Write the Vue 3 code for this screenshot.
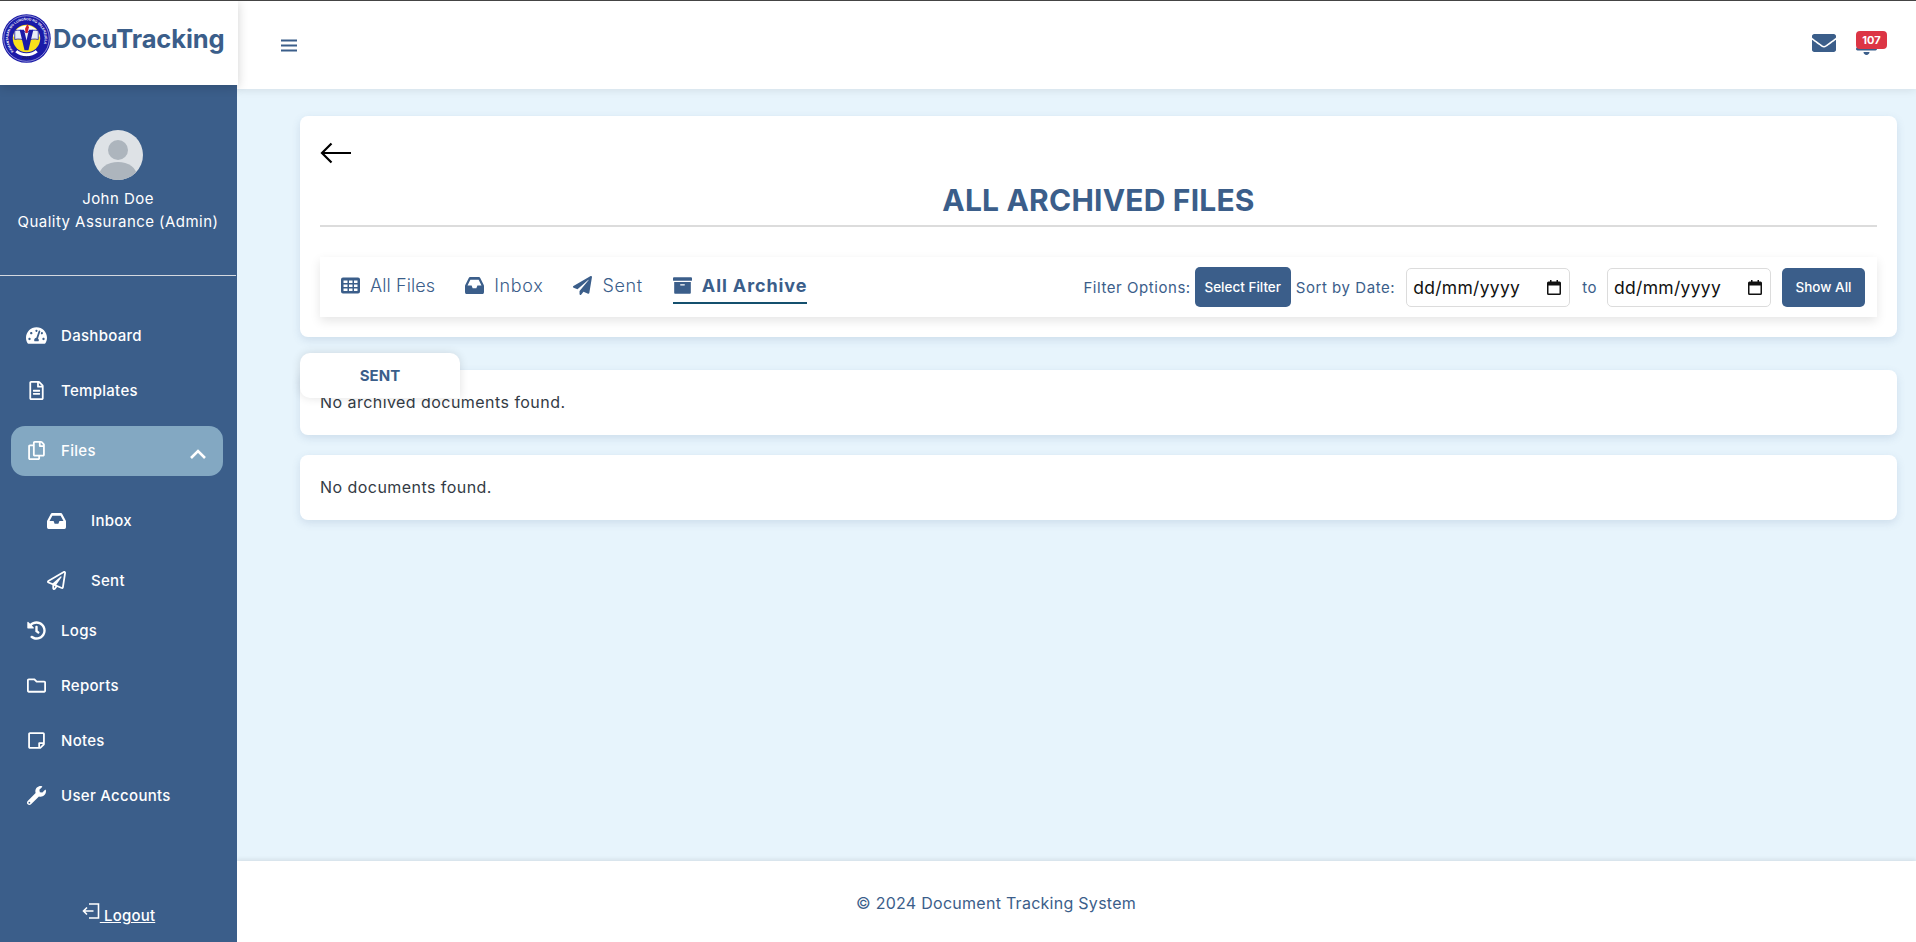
<template>
  <div class="app">
    <aside class="sidebar">
      <div class="brand">
        <svg class="seal" viewBox="0 0 100 100">
          <defs>
            <path id="seal-ring" d="M24 76A37 37 0 1 1 76 76" />
          </defs>
          <circle cx="50" cy="50" r="49.500" fill="#1a1aa8" />
          <circle cx="50" cy="50" r="46.500" fill="none" stroke="#fff" stroke-width="1" />
          <text class="seal-text"><textPath href="#seal-ring">PAMANTASAN NG LUNGSOD NG VALENZUELA</textPath></text>
          <path d="M27 78a37 37 0 0 0 46 0l-8-8H35z" fill="#fff" />
          <circle cx="50" cy="50" r="30" fill="#1a1aa8" />
          <circle cx="50" cy="50" r="28" fill="#f9e21b" />
          <path d="M22.500 46a28 28 0 0 1 55 0z" fill="#fff" />
          <path d="M26 34c8-2 17-1 24 4 7-5 16-6 24-4v18c-8-2-17-1-24 4-7-5-16-6-24-4z" fill="#e8edf6" stroke="#1a1aa8" stroke-width="1.600" />
          <path d="M36 32h9l5 22 5-22h9L54 74h-8z" fill="#1a1aa8" />
          <path d="M52 20l3 7-3 12h-4l-1-9z" fill="#d2232a" />
          <text x="50" y="92" class="seal-year">2002</text>
        </svg>
        <span class="brand-name">DocuTracking</span>
      </div>

      <div class="profile">
        <svg class="avatar" viewBox="0 0 50 50">
          <defs>
            <clipPath id="avatar-clip"><circle cx="25" cy="25" r="25" /></clipPath>
          </defs>
          <g clip-path="url(#avatar-clip)">
            <rect width="50" height="50" fill="#dee2e6" />
            <circle cx="25" cy="20" r="10" fill="#adb5bd" />
            <ellipse cx="25" cy="46" rx="19" ry="14" fill="#adb5bd" />
          </g>
        </svg>
        <div class="profile-name">John Doe</div>
        <div class="profile-name">Quality Assurance (Admin)</div>
      </div>

      <nav class="nav">
        <a class="nav-item">
          <svg class="nav-icon" viewBox="0 0 576 512"><path fill="currentColor" d="M288 32C128.94 32 0 160.94 0 320c0 52.8 14.25 102.26 39.06 144.8 5.61 9.62 16.3 15.2 27.44 15.2h443c11.14 0 21.83-5.58 27.44-15.2C561.75 422.26 576 372.8 576 320c0-159.06-128.94-288-288-288zm0 64c14.71 0 26.58 10.13 30.32 23.65-1.11 2.26-2.64 4.23-3.45 6.67l-9.22 27.67c-5.13 3.49-10.97 6.01-17.64 6.01-17.67 0-32-14.33-32-32S270.33 96 288 96zM96 384c-17.67 0-32-14.33-32-32s14.33-32 32-32 32 14.33 32 32-14.33 32-32 32zm48-160c-17.67 0-32-14.33-32-32s14.33-32 32-32 32 14.33 32 32-14.33 32-32 32zm246.77-72.41l-61.33 184C343.13 347.33 352 364.54 352 384c0 11.72-3.38 22.55-8.88 32H232.88c-5.5-9.45-8.88-20.28-8.88-32 0-33.94 26.5-61.43 59.9-63.59l61.34-184.01c4.17-12.56 17.73-19.45 30.36-15.17 12.57 4.19 19.35 17.79 15.17 30.36zm14.66 57.2l15.52-46.55c3.47-1.29 7.13-2.23 11.05-2.23 17.67 0 32 14.33 32 32s-14.33 32-32 32c-11.38-.01-20.89-6.28-26.57-15.22zM480 384c-17.67 0-32-14.33-32-32s14.33-32 32-32 32 14.33 32 32-14.33 32-32 32z" /></svg>
          Dashboard
        </a>
        <a class="nav-item">
          <svg class="nav-icon" viewBox="0 0 384 512"><path fill="currentColor" d="M288 248v28c0 6.6-5.4 12-12 12H108c-6.6 0-12-5.4-12-12v-28c0-6.6 5.4-12 12-12h168c6.6 0 12 5.4 12 12zm-12 72H108c-6.6 0-12 5.4-12 12v28c0 6.6 5.4 12 12 12h168c6.6 0 12-5.4 12-12v-28c0-6.6-5.4-12-12-12zm108-188.1V464c0 26.5-21.5 48-48 48H48c-26.5 0-48-21.5-48-48V48C0 21.5 21.5 0 48 0h204.1C264.8 0 277 5.1 286 14.1L369.9 98c9 8.9 14.1 21.2 14.1 33.9zm-128-80V128h76.1L256 51.9zM336 464V176H232c-13.3 0-24-10.7-24-24V48H48v416h288z" /></svg>
          Templates
        </a>
        <a class="nav-item active">
          <svg class="nav-icon" viewBox="0 0 448 512"><path fill="currentColor" d="M433.941 65.941l-51.882-51.882A48 48 0 0 0 348.118 0H176c-26.51 0-48 21.49-48 48v48H48c-26.51 0-48 21.49-48 48v320c0 26.51 21.49 48 48 48h224c26.51 0 48-21.49 48-48v-48h80c26.51 0 48-21.49 48-48V99.882a48 48 0 0 0-14.059-33.941zM266 464H54a6 6 0 0 1-6-6V150a6 6 0 0 1 6-6h74v224c0 26.51 21.49 48 48 48h96v42a6 6 0 0 1-6 6zm128-96H182a6 6 0 0 1-6-6V54a6 6 0 0 1 6-6h106v88c0 13.255 10.745 24 24 24h88v202a6 6 0 0 1-6 6zm6-256h-64V48h9.632c1.591 0 3.117.632 4.243 1.757l48.368 48.368a6 6 0 0 1 1.757 4.243V112z" /></svg>
          Files
          <svg class="chevron" viewBox="0 0 18 11"><path d="M2 9l7-7 7 7" fill="none" stroke="currentColor" stroke-width="2.600" /></svg>
        </a>
        <div class="sub-nav">
          <a class="sub-item">
            <svg class="sub-icon inbox-icon" viewBox="0 64 576 384" preserveAspectRatio="none"><path fill="currentColor" :d="inboxPath" /></svg>
            Inbox
          </a>
          <a class="sub-item">
            <svg class="sub-icon" viewBox="0 0 512 512"><path fill="currentColor" d="M440 6.5L24 246.4c-34.4 19.9-31.1 70.8 5.7 85.9L144 379.6V464c0 46.4 59.2 65.5 86.6 28.6l43.8-59.1 111.9 46.2c5.9 2.4 12.1 3.6 18.3 3.6 8.2 0 16.3-2.1 23.6-6.2 12.8-7.2 21.6-20 23.9-34.5l59.4-387.2c6.1-40.1-36.9-68.8-71.5-48.9zM192 464v-64.6l36.6 15.1L192 464zm212.6-28.7l-153.8-63.5L391 169.5c10.7-15.5-9.5-33.5-23.7-21.2L155.8 332.6 48 288 464 48l-59.4 387.3z" /></svg>
            Sent
          </a>
        </div>
        <a class="nav-item">
          <svg class="nav-icon" viewBox="0 0 512 512"><path fill="currentColor" d="M504 255.531c.253 136.64-111.18 248.372-247.82 248.468-59.015.042-113.223-20.53-155.822-54.911-11.077-8.94-11.905-25.541-1.839-35.607l11.267-11.267c8.609-8.609 22.353-9.551 31.891-1.984C173.062 425.135 212.781 440 256 440c101.705 0 184-82.311 184-184 0-101.705-82.311-184-184-184-48.814 0-93.149 18.969-126.068 49.932l50.754 50.754c10.08 10.08 2.941 27.314-11.313 27.314H24c-8.837 0-16-7.163-16-16V38.627c0-14.254 17.234-21.393 27.314-11.314l49.372 49.372C129.209 34.136 189.552 8 256 8c136.81 0 247.747 110.78 248 247.531zm-180.912 78.784l9.823-12.63c8.138-10.463 6.253-25.542-4.21-33.679L288 256.349V152c0-13.255-10.745-24-24-24h-16c-13.255 0-24 10.745-24 24v135.651l65.409 50.874c10.463 8.137 25.541 6.253 33.679-4.21z" /></svg>
          Logs
        </a>
        <a class="nav-item">
          <svg class="nav-icon" viewBox="0 0 512 512"><path fill="currentColor" d="M464 128H272l-54.63-54.63c-6-6-14.14-9.37-22.63-9.37H48C21.49 64 0 85.49 0 112v288c0 26.51 21.49 48 48 48h416c26.51 0 48-21.49 48-48V176c0-26.51-21.49-48-48-48zm0 272H48V112h140.12l54.63 54.63c6 6 14.14 9.37 22.63 9.37H464v224z" /></svg>
          Reports
        </a>
        <a class="nav-item">
          <svg class="nav-icon" viewBox="0 0 448 512"><path fill="currentColor" d="M448 348.106V80c0-26.51-21.49-48-48-48H48C21.49 32 0 53.49 0 80v351.988c0 26.51 21.49 48 48 48h268.118a48 48 0 0 0 33.941-14.059l83.882-83.882A48 48 0 0 0 448 348.106zm-128 80v-76.118h76.118L320 428.106zM400 80v223.988H296c-13.255 0-24 10.745-24 24v104H48V80h352z" /></svg>
          Notes
        </a>
        <a class="nav-item">
          <svg class="nav-icon" viewBox="0 0 512 512"><path fill="currentColor" d="M507.73 109.1c-2.24-9.03-13.54-12.09-20.12-5.51l-74.36 74.36-67.88-11.31-11.31-67.88 74.36-74.36c6.62-6.62 3.43-17.9-5.66-20.16-47.38-11.74-99.55.91-136.58 37.93-39.64 39.64-50.55 97.1-34.05 147.2L18.74 402.76c-24.99 24.99-24.99 65.51 0 90.5 24.99 24.99 65.51 24.99 90.5 0l213.21-213.21c50.12 16.71 107.47 5.68 147.37-34.22 37.07-37.07 49.7-89.32 37.91-136.73zM64 472c-13.25 0-24-10.75-24-24 0-13.26 10.75-24 24-24s24 10.74 24 24c0 13.25-10.75 24-24 24z" /></svg>
          User Accounts
        </a>
      </nav>

      <a class="logout">
        <svg class="logout-icon" viewBox="0 0 18 17"><path d="M7 1h9.500v14H7M1.500 8h10M5 4.500L1.500 8 5 11.500" fill="none" stroke="currentColor" stroke-width="1.600" /></svg>
        <span>&nbsp;Logout</span>
      </a>
    </aside>

    <div class="main">
      <header class="topbar">
        <svg class="burger" viewBox="0 0 16 13"><path d="M0 1.500h16M0 6.500h16M0 11.500h16" stroke="currentColor" stroke-width="2" /></svg>
        <div class="top-icons">
          <svg class="mail" viewBox="0 0 512 512"><path fill="currentColor" d="M502.3 190.8c3.9-3.1 9.7-.2 9.7 4.7V400c0 26.5-21.5 48-48 48H48c-26.5 0-48-21.5-48-48V195.6c0-5 5.7-7.8 9.7-4.7 22.4 17.4 52.1 39.5 154.1 113.6 21.1 15.4 56.7 47.8 92.2 47.6 35.7.3 72-32.8 92.3-47.6 102-74.1 131.6-96.3 154-113.7zM256 320c23.2.4 56.6-29.2 73.4-41.4 132.7-96.3 142.8-104.7 173.4-128.7 5.8-4.5 9.2-11.5 9.2-18.9v-19c0-26.5-21.5-48-48-48H48C21.5 64 0 85.5 0 112v19c0 7.4 3.4 14.3 9.2 18.9 30.6 23.9 40.7 32.4 173.4 128.7 16.8 12.2 50.2 41.8 73.4 41.4z" /></svg>
          <div class="bell-wrap">
            <svg class="bell" viewBox="0 0 448 512"><path fill="currentColor" d="M224 512c35.32 0 63.97-28.65 63.97-64H160.03c0 35.35 28.65 64 63.97 64zm215.39-149.71c-19.32-20.76-55.47-51.99-55.47-154.29 0-77.7-54.48-139.9-127.94-155.16V32c0-17.67-14.32-32-31.98-32s-31.98 14.33-31.98 32v20.84C118.56 68.1 64.08 130.3 64.08 208c0 102.3-36.15 133.53-55.47 154.29-6 6.45-8.66 14.16-8.61 21.71.11 16.4 12.98 32 32.1 32h383.8c19.12 0 32-15.6 32.1-32 .05-7.55-2.61-15.27-8.61-21.71z" /></svg>
            <span class="badge">107</span>
          </div>
        </div>
      </header>

      <main class="content">
        <section class="card head-card">
          <svg class="back" viewBox="0 0 32 22"><path d="M31 11H2M11.500 1.500L2 11l9.500 9.500" fill="none" stroke="#000" stroke-width="2.200" /></svg>
          <h1 class="title">ALL ARCHIVED FILES</h1>
          <div class="toolbar">
            <div class="tabs">
              <a class="tab tab-files">
                <svg class="tab-icon" viewBox="0 0 19 16">
                  <path fill="currentColor" fill-rule="evenodd" d="M2 0h15a2 2 0 0 1 2 2v12a2 2 0 0 1-2 2H2a2 2 0 0 1-2-2V2a2 2 0 0 1 2-2zM2.500 3v2.500h4V3zm5.500 0v2.500h3.500V3zm5 0v2.500h3.500V3zM2.500 7v2.500h4V7zM8 7v2.500h3.500V7zm5 0v2.500h3.500V7zM2.500 11v2.500h4V11zM8 11v2.500h3.500V11zm5 0v2.500h3.500V11z" />
                </svg>
                All Files
              </a>
              <a class="tab">
                <svg class="tab-icon inbox-icon" viewBox="0 64 576 384" preserveAspectRatio="none"><path fill="currentColor" :d="inboxPath" /></svg>
                Inbox
              </a>
              <a class="tab">
                <svg class="tab-icon" viewBox="0 0 512 512"><path fill="currentColor" d="M476 3.2L12.5 270.6c-18.1 10.4-15.8 35.6 2.2 43.2L121 358.4l287.3-253.2c5.5-4.9 13.3 2.6 8.6 8.3L176 407v80.5c0 23.6 28.5 32.9 42.5 15.8L282 426l124.6 52.2c14.2 6 30.4-2.9 33-18.2l72-432C515 7.8 493.3-6.8 476 3.2z" /></svg>
                Sent
              </a>
              <a class="tab tab-active">
                <svg class="tab-icon" viewBox="0 0 512 512"><path fill="currentColor" d="M32 448c0 17.7 14.3 32 32 32h384c17.7 0 32-14.3 32-32V160H32v288zm160-212c0-6.6 5.4-12 12-12h104c6.6 0 12 5.4 12 12v8c0 6.6-5.4 12-12 12H204c-6.6 0-12-5.4-12-12v-8zM480 32H32C14.3 32 0 46.3 0 64v48c0 8.8 7.2 16 16 16h480c8.8 0 16-7.2 16-16V64c0-17.7-14.3-32-32-32z" /></svg>
                All Archive
              </a>
            </div>
            <div class="filters">
              <span class="filter-label">Filter Options:</span>
              <button class="btn btn-filter">Select Filter</button>
              <span class="filter-label sort-label">Sort by Date:</span>
              <div v-for="(field, i) in dateFields" :key="field" class="date-group">
                <span v-if="i" class="filter-label to-label">to</span>
                <div class="date">
                  {{ field }}
                  <svg class="cal" viewBox="0 0 14 15">
                    <path fill="#111" fill-rule="evenodd" d="M3 0h1.500v1.500h5V0H11v1.500h1.500A1.500 1.500 0 0 1 14 3v10.500a1.500 1.500 0 0 1-1.500 1.500h-11A1.500 1.500 0 0 1 0 13.500V3a1.500 1.500 0 0 1 1.500-1.500H3zM1.500 5.500v8h11v-8z" />
                  </svg>
                </div>
              </div>
              <button class="btn btn-show">Show All</button>
            </div>
          </div>
        </section>

        <div class="result-block">
          <div class="float-tab">SENT</div>
          <section class="card result">No archived documents found.</section>
        </div>
        <section class="card result">No documents found.</section>
      </main>

      <footer class="footer">© 2024 Document Tracking System</footer>
    </div>
  </div>
</template>

<script setup>
const inboxPath = 'M567.938 243.908L462.25 85.374A48.003 48.003 0 0 0 422.311 64H153.689a48 48 0 0 0-39.938 21.374L8.062 243.908A47.994 47.994 0 0 0 0 270.533V400c0 26.51 21.49 48 48 48h480c26.51 0 48-21.49 48-48V270.533a47.994 47.994 0 0 0-8.062-26.625zM162.252 128h251.497l85.333 128H376l-32 64H232l-32-64H76.918l85.334-128z'
const dateFields = ['dd/mm/yyyy', 'dd/mm/yyyy ']
</script>

<style>
html, body { margin: 0; }
</style>

<style scoped>
.app {
  display: grid;
  grid-template-columns: 237px 1fr;
  height: 941px;
  border-top: 1px solid #444;
  font-family: Inter, "Noto Sans", sans-serif;
  color: #3b5e8a;
  overflow: hidden;
}

.sidebar {
  display: flex;
  flex-direction: column;
  background: #3b5e8a;
  color: #fff;
  position: relative;
  z-index: 2;
}
.brand {
  display: flex;
  align-items: center;
  gap: 2px;
  width: 238px;
  height: 84px;
  padding: 0 0 10px 2px;
  box-sizing: border-box;
  background: #fff;
  box-shadow: 0 2px 10px rgba(0, 0, 0, .18);
}
.seal { width: 49px; height: 49px; flex: none; }
.seal-text { font: 700 6.9px "Liberation Sans", sans-serif; fill: #fff; }
.seal-year { font: 700 8px "Liberation Sans", sans-serif; fill: #1a1a60; text-anchor: middle; }
.brand-name { font-size: 25.5px; font-weight: 700; color: #3b5e8a; letter-spacing: -.1px; }

.profile {
  display: flex;
  flex-direction: column;
  align-items: center;
  height: 191px;
  padding-top: 45px;
  box-sizing: border-box;
  border-bottom: 1px solid #d5d9e0;
  margin-right: 1px;
}
.avatar { width: 50px; height: 50px; margin-bottom: 7px; }
.profile-name { font-size: 15px; line-height: 23px; white-space: nowrap; letter-spacing: .45px; }

.nav { display: flex; flex-direction: column; padding-top: 37px; }
.nav-item {
  display: flex;
  align-items: center;
  height: 45px;
  padding-left: 26px;
  margin-bottom: 10px;
  font-size: 15px;
  font-weight: 450;
  letter-spacing: .3px;
}
.nav-icon { width: 21px; height: 19px; margin-right: 14px; flex: none; }
.active {
  position: relative;
  height: 50px;
  margin: 2.500px 14px 0 11px;
  padding-left: 15px;
  border-radius: 14px;
  background: #83a8c2;
}
.chevron { position: absolute; right: 16px; top: 23px; width: 18px; height: 11px; }
.sub-nav { padding-top: 22.500px; }
.sub-item {
  display: flex;
  align-items: center;
  height: 45px;
  padding-left: 47px;
  margin-bottom: 15px;
  font-size: 15px;
  font-weight: 450;
  letter-spacing: .3px;
}
.sub-nav .sub-item:last-child { margin-bottom: 5px; }
.sub-icon { width: 19px; height: 19px; margin-right: 25px; flex: none; }
.sub-icon.inbox-icon { height: 16px; }

.logout {
  display: flex;
  align-items: flex-start;
  justify-content: center;
  margin-top: auto;
  padding: 0 0 17px 0;
  font-size: 15px;
  font-weight: 450;
  letter-spacing: .2px;
}
.logout span { text-decoration: underline; padding-top: 3px; }
.logout-icon { width: 18px; height: 17px; }

.main { display: flex; flex-direction: column; background: #e7f4fc; min-width: 0; }
.topbar {
  display: flex;
  align-items: center;
  justify-content: space-between;
  flex: none;
  height: 88px;
  padding: 0 38px 0 44px;
  box-sizing: border-box;
  background: #fff;
  box-shadow: 0 2px 8px rgba(0, 0, 0, .08);
}
.burger { width: 16px; height: 13px; }
.top-icons { display: flex; align-items: center; gap: 20px; padding-bottom: 4px; }
.mail { width: 24px; height: 24px; }
.bell-wrap { position: relative; width: 22px; height: 24px; }
.bell { width: 21px; height: 24px; }
.badge {
  position: absolute;
  left: 0;
  top: 0;
  min-width: 31px;
  height: 18px;
  border-radius: 4px;
  background: #dc3545;
  color: #fff;
  font-size: 11px;
  font-weight: 700;
  line-height: 18px;
  text-align: center;
}

.content { flex: 1; padding: 27px 19px 0 63px; min-height: 0; }
.card {
  background: #fff;
  border-radius: 8px;
  box-shadow: 0 3px 8px rgba(60, 94, 138, .15);
}
.head-card { height: 221px; padding: 26px 20px 0; box-sizing: border-box; }
.back { display: block; width: 32px; height: 22px; }
.title {
  margin: 16px 0 0;
  height: 45px;
  border-bottom: 2px solid #dcdcdc;
  font-size: 30px;
  font-weight: 700;
  line-height: 40px;
  letter-spacing: .2px;
  text-align: center;
  color: #3b5e8a;
}
.toolbar {
  display: flex;
  align-items: center;
  justify-content: space-between;
  height: 60px;
  margin-top: 30px;
  padding: 0 12px 0 21px;
  box-shadow: 0 4px 10px rgba(0, 0, 0, .1);
}
.tabs { display: flex; align-items: center; gap: 30px; height: 100%; }
.tab {
  display: flex;
  align-items: center;
  height: 34px;
  padding-bottom: 2px;
  box-sizing: border-box;
  border-bottom: 2px solid transparent;
  font-size: 18px;
  font-weight: 300;
  letter-spacing: .65px;
  white-space: nowrap;
}
.tab-files { letter-spacing: .1px; }
.tab-icon { width: 19px; height: 19px; margin-right: 10px; flex: none; }
.tab-icon.inbox-icon { height: 17px; }
.tab-active {
  font-weight: 700;
  letter-spacing: .9px;
  border-bottom-color: #14506e;
}
.filters { display: flex; align-items: center; }
.filter-label { font-size: 15px; letter-spacing: .55px; white-space: nowrap; }
.sort-label { margin-left: 5px; margin-right: 11px; }
.to-label { margin: 0 10px 0 12px; }
.btn {
  height: 39px;
  border: 0;
  border-radius: 5px;
  background: #3b5e8a;
  color: #fff;
  font: 500 13.5px Inter, sans-serif;
}
.btn-filter { width: 96px; margin-left: 4px; height: 40px; }
.btn-show { width: 83px; margin-left: 11px; }
.date-group { display: flex; align-items: center; }
.date {
  display: flex;
  align-items: center;
  justify-content: space-between;
  width: 164px;
  height: 39px;
  padding: 0 8px 0 6px;
  border: 1px solid #dcdcdc;
  border-radius: 5px;
  box-sizing: border-box;
  background: #fff;
  font-size: 17.5px;
  letter-spacing: .3px;
  color: #111;
}
.cal { width: 14px; height: 15px; }

.result-block { position: relative; margin-top: 33px; }
.result {
  height: 65px;
  padding: 20px 20px 0;
  box-sizing: border-box;
  font-size: 16px;
  letter-spacing: .45px;
  line-height: 24px;
  color: #333b45;
}
.result-block + .result { margin-top: 20px; }
.float-tab {
  position: absolute;
  left: 0;
  top: -17px;
  width: 160px;
  height: 45px;
  padding-top: 11px;
  box-sizing: border-box;
  border-radius: 10px 10px 0 10px;
  background: #fff;
  box-shadow: 0 0 10px rgba(0, 0, 0, .12);
  font-size: 15px;
  font-weight: 700;
  line-height: 24px;
  text-align: center;
}

.footer {
  flex: none;
  height: 81px;
  padding: 32px 0 0 619px;
  box-sizing: border-box;
  background: #fff;
  box-shadow: 0 -2px 4px rgba(0, 0, 0, .08);
  font-size: 16px;
  letter-spacing: .27px;
  line-height: 20px;
}
</style>
